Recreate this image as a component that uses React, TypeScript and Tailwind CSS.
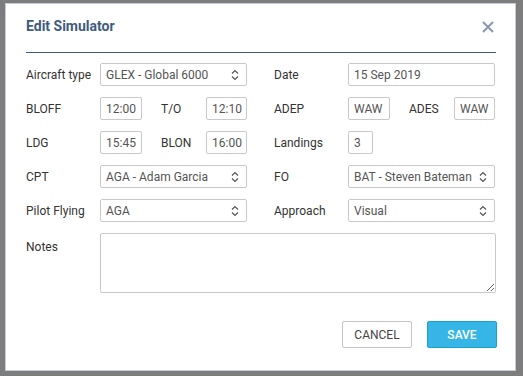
import React from 'react';

const font = { fontFamily: 'Roboto, "Liberation Sans", sans-serif' };

const Chevrons: React.FC = () => (
  <svg width="8" height="12" viewBox="0 0 8 12" className="absolute right-[7px] top-1/2 -translate-y-1/2" fill="none" stroke="#555" strokeWidth="1.2">
    <path d="M1 4.5 L4 1.5 L7 4.5" />
    <path d="M1 7.5 L4 10.5 L7 7.5" />
  </svg>
);

const Select: React.FC<{ value: string; className?: string }> = ({ value, className = 'w-[147px]' }) => (
  <div className={`relative h-[23px] border border-[#c9c9c9] rounded-[2px] bg-white pl-[5px] flex items-center text-[12px] text-[#555] ${className}`}>
    {value}
    <Chevrons />
  </div>
);

const Input: React.FC<{ value: string; className: string }> = ({ value, className }) => (
  <div className={`h-[23px] border border-[#c9c9c9] rounded-[2px] bg-white px-[5px] flex items-center text-[12px] text-[#555] ${className}`}>
    {value}
  </div>
);

const Label: React.FC<{ children: React.ReactNode; className?: string }> = ({ children, className = 'w-[74px]' }) => (
  <div className={`text-[12px] text-[#333] shrink-0 ${className}`}>{children}</div>
);

const App: React.FC = () => {
  return (
    <div className="w-[523px] h-[376px] bg-[#7d7d7d] pt-[3px] pl-[5px]" style={font}>
      <div className="w-[511px] h-[368px] bg-white border border-[#c4cad6] pl-[20px] pr-[19px]">
        <div className="flex items-center justify-between h-[48px] pb-[3px]">
          <h2 className="text-[14px] font-bold text-[#3f5b7e]">Edit Simulator</h2>
          <svg width="12" height="12" viewBox="0 0 12 12" className="mr-[2px]" stroke="#8a97a9" strokeWidth="2">
            <path d="M1 1 L11 11 M11 1 L1 11" />
          </svg>
        </div>
        <div className="h-[1px] bg-[#3f5a78] w-[470px]" />

        <div className="mt-[10px] flex flex-col gap-[11px] w-[470px]">
          <div className="flex gap-[27px]">
            <div className="flex items-center w-[221px]">
              <Label>Aircraft type</Label>
              <Select value="GLEX - Global 6000" />
            </div>
            <div className="flex items-center w-[221px]">
              <Label>Date</Label>
              <Input value="15 Sep 2019" className="w-[147px]" />
            </div>
          </div>

          <div className="flex gap-[27px]">
            <div className="flex items-center w-[221px]">
              <Label>BLOFF</Label>
              <Input value="12:00" className="w-[42px]" />
              <Label className="w-[45px] pl-[19px]">T/O</Label>
              <Input value="12:10" className="w-[41px] ml-auto" />
            </div>
            <div className="flex items-center w-[221px]">
              <Label>ADEP</Label>
              <Input value="WAW" className="w-[42px]" />
              <Label className="w-[64px] pl-[19px]">ADES</Label>
              <Input value="WAW" className="w-[41px]" />
            </div>
          </div>

          <div className="flex gap-[27px]">
            <div className="flex items-center w-[221px]">
              <Label>LDG</Label>
              <Input value="15:45" className="w-[42px]" />
              <Label className="w-[45px] pl-[19px]">BLON</Label>
              <Input value="16:00" className="w-[41px] ml-auto" />
            </div>
            <div className="flex items-center w-[221px]">
              <Label>Landings</Label>
              <Input value="3" className="w-[25px]" />
            </div>
          </div>

          <div className="flex gap-[27px]">
            <div className="flex items-center w-[221px]">
              <Label>CPT</Label>
              <Select value="AGA - Adam Garcia" />
            </div>
            <div className="flex items-center w-[221px]">
              <Label>FO</Label>
              <Select value="BAT - Steven Bateman" />
            </div>
          </div>

          <div className="flex gap-[27px]">
            <div className="flex items-center w-[221px]">
              <Label>Pilot Flying</Label>
              <Select value="AGA" />
            </div>
            <div className="flex items-center w-[221px]">
              <Label>Approach</Label>
              <Select value="Visual" />
            </div>
          </div>

          <div className="flex">
            <Label className="w-[74px] pt-[5px]">Notes</Label>
            <textarea className="w-[396px] h-[60px] border border-[#c9c9c9] rounded-[2px] outline-none" />
          </div>
        </div>

        <div className="flex justify-end gap-[15px] mt-[28px] w-[471px]">
          <button className="w-[70px] h-[27px] border border-[#c4c4c4] rounded-[2px] bg-white text-[12px] text-[#444]">CANCEL</button>
          <button className="w-[70px] h-[27px] border border-[#1e9fd2] rounded-[2px] bg-[#36b6e6] text-[12px] font-medium text-white">SAVE</button>
        </div>
      </div>
    </div>
  );
};

export default App;
